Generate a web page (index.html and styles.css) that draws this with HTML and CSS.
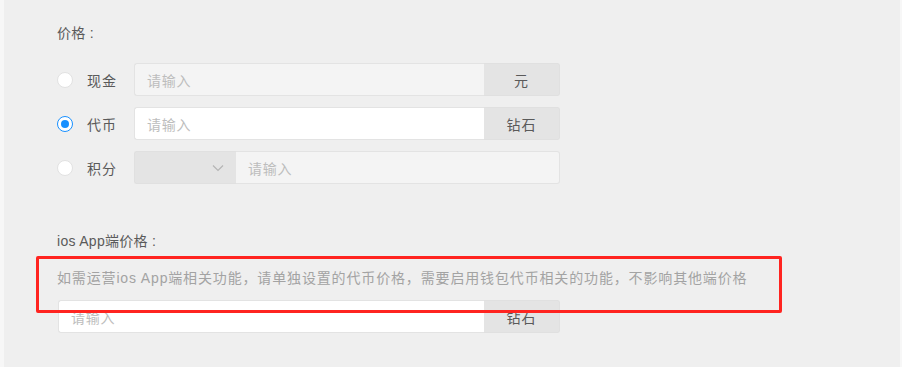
FILE: index.html
```html
<!DOCTYPE html>
<html lang="zh-CN">
<head>
<meta charset="utf-8">
<title>价格</title>
<link rel="stylesheet" href="styles.css">
</head>
<body>
<div class="page">
  <div class="panel">
    <div class="field-label">价格 :</div>
    <div class="rows">
      <div class="row">
        <span class="radio"></span>
        <span class="opt">现金</span>
        <div class="group">
          <div class="input disabled"><span class="ph">请输入</span></div>
          <div class="addon">元</div>
        </div>
      </div>
      <div class="row">
        <span class="radio checked"></span>
        <span class="opt">代币</span>
        <div class="group">
          <div class="input"><span class="ph">请输入</span></div>
          <div class="addon">钻石</div>
        </div>
      </div>
      <div class="row">
        <span class="radio"></span>
        <span class="opt">积分</span>
        <div class="group">
          <div class="select">
            <svg class="chev" width="12" height="8" viewBox="0 0 12 8"><path d="M1 1.5 L6 6.5 L11 1.5" fill="none" stroke="#b5b5b5" stroke-width="1.2"/></svg>
          </div>
          <div class="input disabled wide"><span class="ph">请输入</span></div>
        </div>
      </div>
    </div>

    <div class="field-label second">ios App端价格 :</div>
    <div class="hint">如需运营ios App端相关功能，请单独设置的代币价格，需要启用钱包代币相关的功能，不影响其他端价格</div>
    <div class="group ios">
      <div class="input"><span class="ph">请输入</span></div>
      <div class="addon">钻石</div>
    </div>
    <div class="highlight"></div>
  </div>
</div>
</body>
</html>
```

FILE: styles.css
```css
* { box-sizing: border-box; }
html, body { margin: 0; padding: 0; }
body {
  font-family: "Liberation Sans", "Noto Sans CJK SC", sans-serif;
  font-size: 14px;
  color: #5a5a5a;
  background: #f7f7f7;
}
.page {
  width: 902px;
  height: 367px;
  padding: 0 2px 0 4px;
}
.panel {
  position: relative;
  height: 367px;
  background: #efefef;
  padding: 24px 0 0 53px;
}
.field-label {
  font-size: 14px;
  line-height: 18px;
  color: #5a5a5a;
  letter-spacing: 0.3px;
}
.rows {
  margin-top: 21px;
  display: flex;
  flex-direction: column;
  gap: 11px;
}
.row {
  display: flex;
  align-items: center;
  height: 33px;
}
.radio {
  width: 16px;
  height: 16px;
  border-radius: 50%;
  background: #fff;
  border: 1px solid #e2e2e2;
  margin-right: 14px;
  flex: none;
  position: relative;
}
.radio.checked {
  border: 1.5px solid #1890ff;
}
.radio.checked::after {
  content: "";
  position: absolute;
  left: 50%;
  top: 50%;
  width: 8px;
  height: 8px;
  margin: -4px 0 0 -4px;
  border-radius: 50%;
  background: #1890ff;
}
.opt {
  width: 47px;
  font-size: 14px;
  letter-spacing: 1px;
  color: #5a5a5a;
}
.group {
  display: flex;
  width: 426px;
  height: 33px;
}
.input {
  flex: 1;
  height: 33px;
  background: #fff;
  border: 1px solid #e3e3e3;
  border-right: none;
  border-radius: 3px 0 0 3px;
  display: flex;
  align-items: center;
  padding-left: 12px;
}
.input.disabled {
  background: #f4f4f4;
}
.input.wide {
  border-radius: 0 3px 3px 0;
  border-right: 1px solid #e3e3e3;
  border-left: none;
}
.ph {
  color: #bdbdbd;
  font-size: 14px;
  letter-spacing: 0.7px;
}
.addon {
  width: 76px;
  height: 33px;
  background: #e4e4e4;
  border: 1px solid #e0e0e0;
  border-left: none;
  border-radius: 0 3px 3px 0;
  display: flex;
  align-items: center;
  justify-content: center;
  color: #5a5a5a;
  letter-spacing: 1px;
}
.select {
  width: 102px;
  height: 33px;
  background: #e4e4e4;
  border: 1px solid #e0e0e0;
  border-right: none;
  border-radius: 3px 0 0 3px;
  display: flex;
  align-items: center;
  justify-content: flex-end;
  padding-right: 12px;
}
.field-label.second {
  margin-top: 48px;
}
.hint {
  margin-top: 19px;
  color: #a3a3a3;
  font-size: 14px;
  line-height: 18px;
  letter-spacing: 0.85px;
}
.group.ios {
  margin-top: 13px;
  width: 502px;
  margin-left: 1px;
}
.highlight {
  position: absolute;
  left: 32px;
  top: 256px;
  width: 746px;
  height: 57px;
  border: 3px solid #ff2420;
  border-radius: 2px;
}
```
